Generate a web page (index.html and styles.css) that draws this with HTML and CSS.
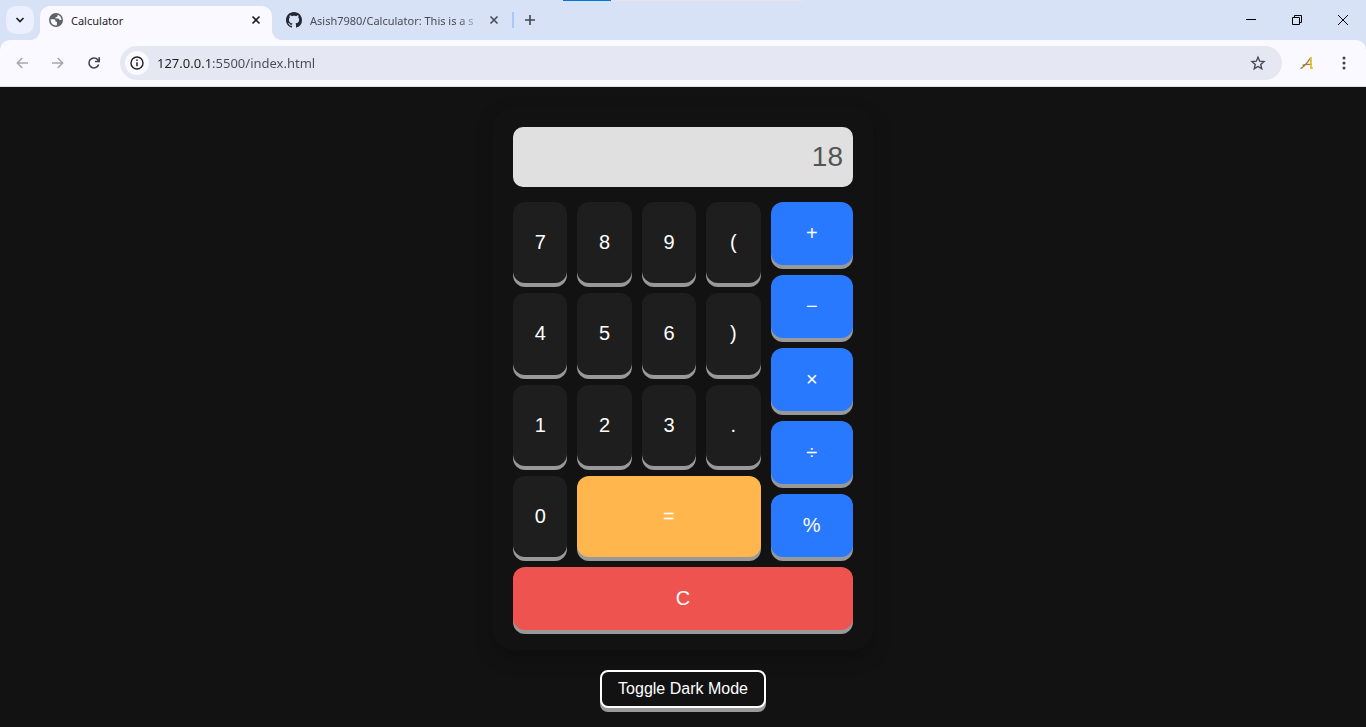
FILE: index.html
```html
<!DOCTYPE html>
<html lang="en">
<head>
<meta charset="utf-8">
<meta name="viewport" content="width=device-width, initial-scale=1">
<title>Calculator</title>
<link rel="stylesheet" href="styles.css">
</head>
<body>
<header class="browser">
  <div class="load-track"><div class="load-bar"></div></div>
  <div class="tab-strip">
    <button class="tab-search" aria-label="Search tabs">
      <svg width="28" height="28" viewBox="0 0 28 28"><path d="M10.500 12l3.500 3.500 3.500-3.500" fill="none" stroke="#1f1f1f" stroke-width="1.700"/></svg>
    </button>
    <div class="tab tab-active">
      <button class="tab-label">
        <svg width="14" height="14" viewBox="0 0 14 14"><circle cx="7" cy="7" r="7" fill="#5f6368"/><path d="M1.600 6.200h3.200c1 0 1.700.7 1.700 1.600v.9h1.400v3.600C4.500 12.900 1.300 10.400 1.600 6.200zM8.600 1.700c2.300.7 4 2.900 3.900 5.300h-2c-.3-.9-1-1.400-1.900-1.400H6.500V4.200h.7c.8 0 1.400-.6 1.400-1.400z" fill="#faf9ff"/></svg>
        <span class="tab-title">Calculator</span>
      </button>
      <button class="icon-button tab-close" aria-label="Close Calculator">
        <svg width="16" height="16" viewBox="0 0 16 16"><path d="M4.500 4.500l7 7M11.500 4.500l-7 7" stroke="#1f1f1f" stroke-width="1.600"/></svg>
      </button>
    </div>
    <div class="tab tab-idle">
      <button class="tab-label">
        <svg width="16" height="16" viewBox="0 0 16 16"><path fill="#24292f" d="M8 0C3.58 0 0 3.58 0 8c0 3.54 2.29 6.53 5.47 7.59.4.07.55-.17.55-.38 0-.19-.01-.82-.01-1.49-2.01.37-2.53-.49-2.69-.94-.09-.23-.48-.94-.82-1.13-.28-.15-.68-.52-.01-.53.63-.01 1.08.58 1.23.82.72 1.21 1.87.87 2.33.66.07-.52.28-.87.51-1.07-1.78-.2-3.64-.89-3.64-3.95 0-.87.31-1.59.82-2.15-.08-.2-.36-1.02.08-2.12 0 0 .67-.21 2.2.82.64-.18 1.32-.27 2-.27s1.36.09 2 .27c1.53-1.04 2.2-.82 2.2-.82.44 1.1.16 1.92.08 2.12.51.56.82 1.27.82 2.15 0 3.07-1.87 3.75-3.65 3.95.29.25.54.73.54 1.48 0 1.07-.01 1.93-.01 2.2 0 .21.15.46.55.38A8.01 8.01 0 0 0 16 8c0-4.42-3.58-8-8-8z"/></svg>
        <span class="tab-title tab-title-fade">Asish7980/Calculator: This is a s</span>
      </button>
      <button class="icon-button tab-close" aria-label="Close Asish7980/Calculator">
        <svg width="16" height="16" viewBox="0 0 16 16"><path d="M4.500 4.500l7 7M11.500 4.500l-7 7" stroke="#474b55" stroke-width="1.600"/></svg>
      </button>
    </div>
    <span class="tab-divider"></span>
    <button class="icon-button new-tab" aria-label="New tab">
      <svg width="16" height="16" viewBox="0 0 16 16"><path d="M8 3v10M3 8h10" stroke="#41464f" stroke-width="1.600"/></svg>
    </button>
    <div class="window-controls">
      <button class="icon-button window-button" aria-label="Minimize"><svg width="10" height="10" viewBox="0 0 10 10"><path d="M0 4.500h10" stroke="#000"/></svg></button>
      <button class="icon-button window-button" aria-label="Restore"><svg width="10" height="10" viewBox="0 0 10 10"><path d="M.5 2.500h7v7h-7zM2.500 2.500V.5h7v7H7.500" fill="none" stroke="#000"/></svg></button>
      <button class="icon-button window-button" aria-label="Close window"><svg width="10" height="10" viewBox="0 0 10 10"><path d="M0 0l10 10M10 0L0 10" stroke="#000"/></svg></button>
    </div>
  </div>
  <div class="toolbar">
    <button class="icon-button nav-button" aria-label="Back"><svg width="16" height="16" viewBox="0 0 16 16"><path d="M14 8H3.500M8.300 3L3.300 8l5 5" fill="none" stroke="#a6a7ad" stroke-width="1.500"/></svg></button>
    <button class="icon-button nav-button" aria-label="Forward"><svg width="16" height="16" viewBox="0 0 16 16"><path d="M2 8h10.500M7.700 3l5 5-5 5" fill="none" stroke="#a6a7ad" stroke-width="1.500"/></svg></button>
    <button class="icon-button nav-button" aria-label="Reload"><svg width="16" height="16" viewBox="0 0 16 16"><path d="M12.700 9.600A5 5 0 1 1 11.800 4.700l1 1.300" fill="none" stroke="#3c4350" stroke-width="1.600"/><path d="M13.200 2.300v4.200H9" fill="none" stroke="#3c4350" stroke-width="1.600"/></svg></button>
    <div class="address">
      <button class="icon-button site-info" aria-label="View site information"><svg width="16" height="16" viewBox="0 0 16 16"><circle cx="8" cy="8" r="6" fill="none" stroke="#1f1f1f" stroke-width="1.400"/><path d="M8 7.200v4M8 4.600v1.500" stroke="#1f1f1f" stroke-width="1.500"/></svg></button>
      <input class="address-input" type="text" value="127.0.0.1:5500/index.html" aria-label="Address" spellcheck="false">
      <button class="icon-button bookmark" aria-label="Bookmark this tab"><svg width="16" height="16" viewBox="0 0 16 16"><path d="M8 2.200l1.700 4 4.300.4-3.250 2.850 1 4.250L8 11.450 4.250 13.700l1-4.250L2 6.600l4.300-.4z" fill="none" stroke="#474b55" stroke-width="1.400"/></svg></button>
    </div>
    <button class="icon-button extension" aria-label="Extension"><svg width="16" height="16" viewBox="0 0 16 16"><path d="M1.500 13.500C5.500 12.500 8.500 7 12 2.300M3.500 10.300C6 9.300 9 9.600 12.500 9.300" fill="none" stroke="#9a833e" stroke-width="1.300"/><path d="M11.800 2l.3 11.200 1.700-.3" fill="none" stroke="#e8b91d" stroke-width="1.700"/></svg></button>
    <button class="icon-button menu" aria-label="Menu"><svg width="16" height="16" viewBox="0 0 16 16"><g fill="#3c4350"><circle cx="8" cy="3" r="1.500"/><circle cx="8" cy="8" r="1.500"/><circle cx="8" cy="13" r="1.500"/></g></svg></button>
  </div>
</header>
<main class="page">
  <section class="calculator" aria-label="Calculator">
    <input class="display" type="text" value="18" aria-label="Result" disabled>
    <div class="keys">
      <div class="numbers">
        <button class="key">7</button>
        <button class="key">8</button>
        <button class="key">9</button>
        <button class="key">(</button>
        <button class="key">4</button>
        <button class="key">5</button>
        <button class="key">6</button>
        <button class="key">)</button>
        <button class="key">1</button>
        <button class="key">2</button>
        <button class="key">3</button>
        <button class="key">.</button>
        <button class="key">0</button>
        <button class="key equals">=</button>
      </div>
      <div class="operators">
        <button class="key operator">+</button>
        <button class="key operator">−</button>
        <button class="key operator">×</button>
        <button class="key operator">÷</button>
        <button class="key operator">%</button>
      </div>
    </div>
    <button class="key clear">C</button>
  </section>
  <button class="toggle">Toggle Dark Mode</button>
</main>
</body>
</html>
```
FILE: styles.css
```css
* {
  box-sizing: border-box;
}

body {
  margin: 0;
  min-height: 100vh;
  display: flex;
  flex-direction: column;
  background: #121212;
  font-family: "Liberation Sans", Arial, sans-serif;
}

button,
input {
  margin: 0;
  padding: 0;
  border: 0;
  font-family: inherit;
}

svg {
  display: block;
  flex: none;
}

/* Browser window */
.browser {
  position: relative;
  background: #d8e2f7;
  font-family: "Noto Sans", "Open Sans", sans-serif;
}

.load-track {
  position: absolute;
  top: 0;
  left: 50%;
  width: 240px;
  height: 1px;
  margin-left: -120px;
  background: #e5e5e5;
}

.load-bar {
  width: 20%;
  height: 1px;
  background: #0078d7;
}

.icon-button {
  display: flex;
  align-items: center;
  justify-content: center;
  flex: none;
  background: none;
}

.tab-strip {
  display: flex;
  align-items: center;
  height: 40px;
  padding-left: 6px;
}

.tab-search {
  width: 28px;
  height: 28px;
  margin-right: 6px;
  border-radius: 10px;
  background: #ebefff;
}

.tab {
  display: flex;
  align-items: center;
  width: 232px;
  height: 34px;
  padding: 0 8px;
  align-self: flex-end;
  padding-bottom: 6px;
}

.tab-active {
  position: relative;
  border-radius: 10px 10px 0 0;
  background: #faf9ff;
  color: #1f1f1f;
}

.tab-active::before,
.tab-active::after {
  content: "";
  position: absolute;
  bottom: 0;
  width: 10px;
  height: 10px;
}

.tab-active::before {
  right: 100%;
  background: radial-gradient(circle at 0 0, transparent 10px, #faf9ff 10px);
}

.tab-active::after {
  left: 100%;
  background: radial-gradient(circle at 100% 0, transparent 10px, #faf9ff 10px);
}

.tab-idle {
  width: 238px;
  padding-left: 14px;
  color: #474b55;
}

.tab-label {
  display: flex;
  align-items: center;
  gap: 8px;
  flex: 1;
  min-width: 0;
  height: 28px;
  background: none;
  color: inherit;
  font-size: 11px;
  text-align: left;
}

.tab-active .tab-label {
  padding-left: 1px;
}

.tab-title {
  flex: 1;
  min-width: 0;
  overflow: hidden;
  white-space: nowrap;
}

.tab-title-fade {
  -webkit-mask-image: linear-gradient(to right, #000 148px, transparent 172px);
  mask-image: linear-gradient(to right, #000 148px, transparent 172px);
}

.tab-close {
  width: 16px;
  height: 16px;
}

.tab-divider {
  width: 2px;
  height: 16px;
  margin-left: 2px;
  background: #a8c7fa;
}

.new-tab {
  width: 28px;
  height: 28px;
  margin-left: 2px;
}

.window-controls {
  display: flex;
  margin-left: auto;
}

.window-button {
  width: 46px;
  height: 40px;
}

.toolbar {
  display: flex;
  align-items: center;
  height: 47px;
  padding: 0 8px 1px 4px;
  border-bottom: 1px solid #e2e1ea;
  border-radius: 10px 10px 0 0;
  background: #faf9ff;
}

.nav-button {
  width: 36px;
  height: 34px;
}

.address {
  display: flex;
  align-items: center;
  flex: 1;
  height: 34px;
  margin-left: 8px;
  padding: 0 16px 0 5px;
  border-radius: 17px;
  background: #e5e8f3;
}

.site-info {
  width: 24px;
  height: 24px;
  border-radius: 50%;
  background: #faf9ff;
}

.address-input {
  flex: 1;
  min-width: 0;
  height: 24px;
  margin-left: 8px;
  background: linear-gradient(to right, #1f1f1f 54px, #474b55 54px);
  -webkit-background-clip: text;
  background-clip: text;
  color: transparent;
  font-size: 13px;
}

.extension {
  width: 34px;
  height: 34px;
  margin-left: 8px;
}

.menu {
  width: 28px;
  height: 34px;
  margin-left: 6px;
}

/* Calculator page */
.page {
  display: flex;
  flex: 1;
  flex-direction: column;
  align-items: center;
  gap: 20px;
  padding: 20px 20px 19px;
}

.calculator {
  display: flex;
  flex-direction: column;
  width: 100%;
  max-width: 380px;
  padding: 20px;
  border-radius: 20px;
  background: #121212;
  box-shadow: 0 8px 20px rgba(0, 0, 0, 0.2);
}

.display {
  width: 100%;
  height: 60px;
  margin-bottom: 15px;
  padding: 10px;
  border-radius: 10px;
  background: #e0e0e0;
  color: #545454;
  font-size: 28px;
  text-align: right;
}

.keys {
  display: grid;
  grid-template-columns: 3fr 1fr;
  gap: 10px;
  margin-bottom: 10px;
}

.numbers {
  display: grid;
  grid-template-columns: repeat(4, 1fr);
  grid-auto-rows: 1fr;
  gap: 10px;
}

.operators {
  display: grid;
  gap: 10px;
}

.key {
  padding: 20px 0;
  border-radius: 12px;
  background: #1e1e1e;
  box-shadow: 0 4px #999;
  color: #fff;
  font-size: 20px;
  line-height: 23px;
}

.operator {
  background: #2979ff;
}

.equals {
  grid-column: span 3;
  background: #ffb74d;
}

.clear {
  background: #ef5350;
}

.toggle {
  padding: 8px 16px;
  border: 2px solid #fff;
  border-radius: 8px;
  background: #121212;
  box-shadow: 0 4px #999;
  color: #fff;
  font-size: 16px;
  line-height: 18px;
}
```
